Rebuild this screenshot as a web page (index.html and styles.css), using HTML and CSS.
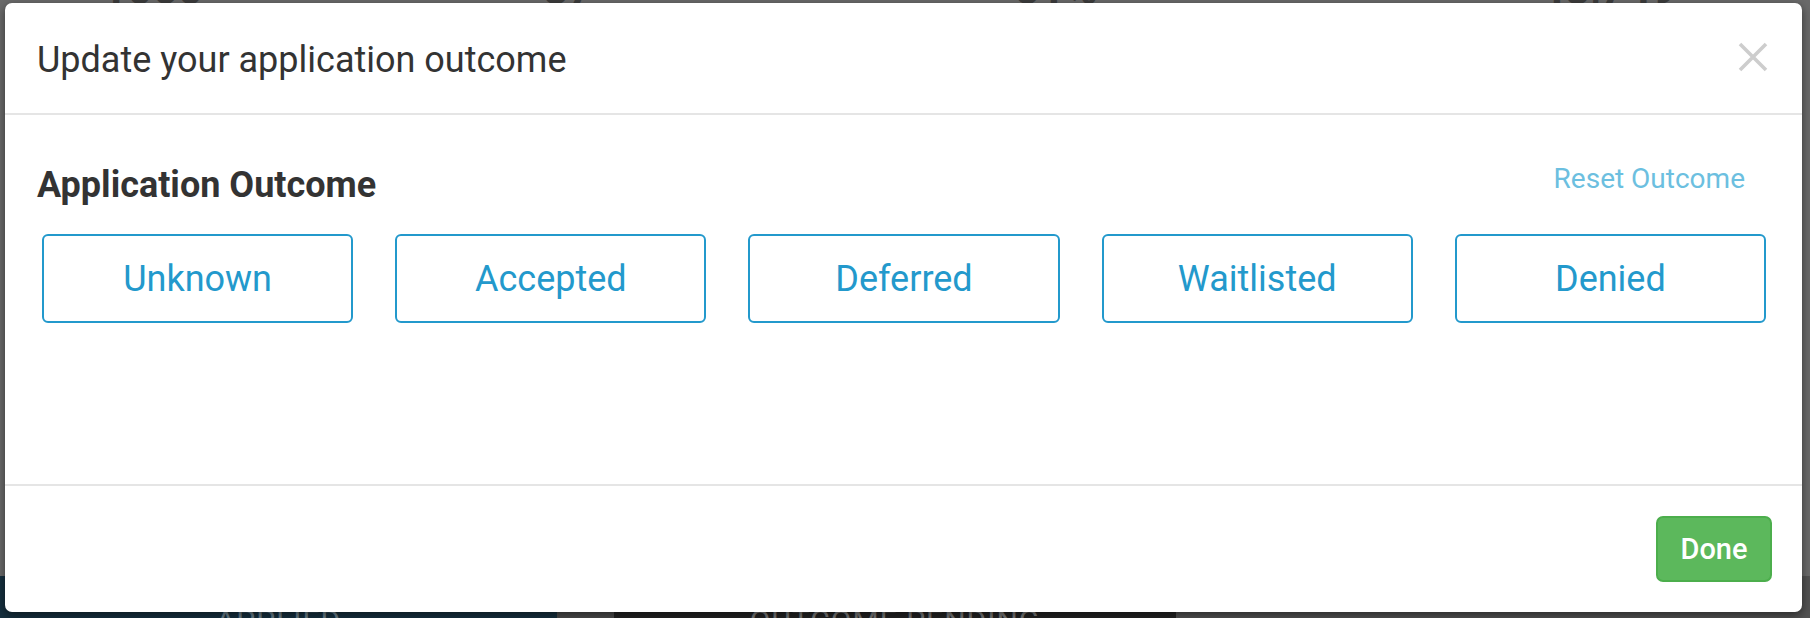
FILE: index.html
```html
<!DOCTYPE html>
<html lang="en">
<head>
<meta charset="utf-8">
<title>Update your application outcome</title>
<link rel="stylesheet" href="styles.css">
</head>
<body>
<div class="page">
  <div class="stats">
    <span class="stat stat-1">1060</span>
    <span class="stat stat-2">87</span>
    <span class="stat stat-3">51%</span>
    <span class="stat stat-4">48,749</span>
  </div>
  <div class="filler"></div>
  <div class="tabs">
    <div class="tab tab-applied">APPLIED</div>
    <div class="tab tab-gap"></div>
    <div class="tab tab-pending">OUTCOME PENDING</div>
    <div class="tab tab-rest"></div>
  </div>
</div>

<div class="overlay">
  <div class="modal">
    <div class="modal-header">
      <h4 class="modal-title">Update your application outcome</h4>
      <button class="close" aria-label="Close">
        <svg width="30" height="30" viewBox="0 0 30 30"><path d="M2 2 L28 28 M28 2 L2 28" stroke="#cdcdcd" stroke-width="3.6" fill="none"/></svg>
      </button>
    </div>
    <div class="modal-body">
      <div class="section-head">
        <h3 class="section-title">Application Outcome</h3>
        <a class="reset-link">Reset Outcome</a>
      </div>
      <div class="outcomes">
        <button class="outcome">Unknown</button>
        <button class="outcome">Accepted</button>
        <button class="outcome">Deferred</button>
        <button class="outcome">Waitlisted</button>
        <button class="outcome">Denied</button>
      </div>
    </div>
    <div class="modal-footer">
      <button class="btn-done">Done</button>
    </div>
  </div>
</div>
</body>
</html>
```

FILE: styles.css
```css
html, body {
  margin: 0;
  padding: 0;
}
body {
  width: 1810px;
  height: 618px;
  overflow: hidden;
  font-family: Roboto, "Liberation Sans", Arial, sans-serif;
  background: #6a6a6a;
  position: relative;
}

/* backdrop page (already dimmed) */
.page {
  height: 618px;
  display: flex;
  flex-direction: column;
}
.stats {
  height: 15px;
  overflow: hidden;
  display: flex;
  align-items: flex-end;
  flex-shrink: 0;
}
.stat {
  font-size: 44px;
  font-weight: 700;
  color: #3c3c3c;
  line-height: normal;
}
.stat-1 { margin-left: 102px; }
.stat-2 { margin-left: 340px; }
.stat-3 { margin-left: 421px; }
.stat-4 { margin-left: 442px; }
.filler { flex: 1; }
.tabs {
  height: 42px;
  display: flex;
  flex-shrink: 0;
}
.tab {
  display: flex;
  justify-content: center;
  padding-top: 30px;
  font-size: 30px;
  line-height: 30px;
  letter-spacing: 1px;
  overflow: hidden;
  box-sizing: border-box;
}
.tab-applied { width: 557px; background: #16303f; color: #6d808c; }
.tab-gap { width: 57px; background: #4c4c4c; }
.tab-pending { width: 562px; background: #232323; color: #7a7a7a; }
.tab-rest { flex: 1; background: #525252; }

/* overlay + modal */
.overlay {
  position: absolute;
  inset: 0;
  padding: 3px 8px 6px 5px;
  box-sizing: border-box;
  display: flex;
}
.modal {
  flex: 1;
  background: #fff;
  border-radius: 7px;
  box-shadow: 0 3px 10px rgba(0,0,0,0.5);
  display: flex;
  flex-direction: column;
  overflow: hidden;
}
.modal-header {
  display: flex;
  justify-content: space-between;
  align-items: flex-start;
  padding: 36px 34px 32px 32px;
  border-bottom: 2px solid #e5e5e5;
}
.modal-title {
  margin: 0;
  font-size: 36px;
  line-height: 42px;
  font-weight: 400;
  color: #333;
}
.close {
  margin-top: 3px;
  padding: 0;
  border: 0;
  background: none;
  width: 30px;
  height: 30px;
  display: block;
}
.close svg { display: block; }

.modal-body {
  flex: 1;
  padding: 0 32px;
}
.section-head {
  display: flex;
  justify-content: space-between;
  align-items: flex-start;
  padding: 47px 25px 0 0;
}
.section-title {
  margin: 2px 0 0;
  font-size: 36px;
  line-height: 42px;
  font-weight: 700;
  color: #333;
}
.reset-link {
  font-size: 28px;
  line-height: 33px;
  color: #6cbfe0;
}
.outcomes {
  display: grid;
  grid-template-columns: repeat(5, 1fr);
  column-gap: 42px;
  padding: 0 4px 0 5px;
  margin-top: 28px;
}
.outcome {
  height: 89px;
  border: 2px solid #2399cc;
  border-radius: 6px;
  background: #fff;
  color: #2399cc;
  font-family: Roboto, "Liberation Sans", Arial, sans-serif;
  font-size: 36px;
  line-height: 42px;
  padding: 0;
}

.modal-footer {
  display: flex;
  justify-content: flex-end;
  padding: 30px;
  border-top: 2px solid #e5e5e5;
}
.btn-done {
  width: 116px;
  height: 66px;
  box-sizing: border-box;
  background: #5cb85c;
  border: 2px solid #4cae4c;
  border-radius: 7px;
  color: #fff;
  font-family: Roboto, "Liberation Sans", Arial, sans-serif;
  font-size: 29px;
  font-weight: 500;
  line-height: 33px;
  padding: 0;
}
```
